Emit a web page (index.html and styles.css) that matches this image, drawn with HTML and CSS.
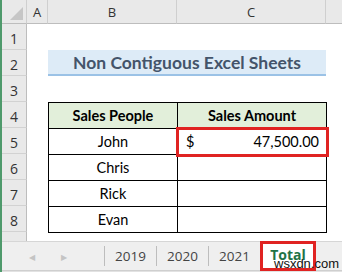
FILE: index.html
```html
<!DOCTYPE html>
<html lang="en">
<head>
    <meta charset="UTF-8">
    <meta name="viewport" content="width=device-width, initial-scale=1.0">
    <title>Non Contiguous Excel Sheets</title>
    <link rel="stylesheet" href="styles.css">
</head>
<body>
    <div class="window">
        <div class="sheet">
            <div class="corner"><span class="tri"></span></div>
            <div class="col-head">A</div>
            <div class="col-head">B</div>
            <div class="col-head">C</div>
            <div class="col-head last"></div>

            <div class="row-head">1</div>
            <div class="row-head">2</div>
            <div class="row-head">3</div>
            <div class="row-head">4</div>
            <div class="row-head">5</div>
            <div class="row-head">6</div>
            <div class="row-head">7</div>
            <div class="row-head">8</div>
            <div class="row-head r9"></div>

            <div class="title">Non Contiguous Excel Sheets</div>

            <table class="sales">
                <tr>
                    <th>Sales People</th>
                    <th>Sales Amount</th>
                </tr>
                <tr>
                    <td>John</td>
                    <td class="amount">
                        <div class="money"><span>$</span><span>47,500.00</span></div>
                        <span class="mark"></span>
                    </td>
                </tr>
                <tr>
                    <td>Chris</td>
                    <td></td>
                </tr>
                <tr>
                    <td>Rick</td>
                    <td></td>
                </tr>
                <tr>
                    <td>Evan</td>
                    <td></td>
                </tr>
            </table>
        </div>

        <div class="tabbar">
            <div class="nav">
                <span class="arrow">&#9664;</span>
                <span class="arrow">&#9654;</span>
            </div>
            <div class="tab">2019</div>
            <div class="tab">2020</div>
            <div class="tab">2021</div>
            <div class="tab active">Total<span class="mark"></span></div>
            <span class="watermark">wsxdn.com</span>
        </div>
        <div class="status"></div>
    </div>
</body>
</html>
```

FILE: styles.css
```css
body { margin: 0; font-family: Lato, "Open Sans", sans-serif; background: #fff; }
.window { width: 342px; height: 272px; border-left: 2px solid #4f9a6c; box-sizing: border-box; display: flex; flex-direction: column; overflow: hidden; }

.sheet { display: grid; grid-template-columns: 25px 21px 129px 149px 1fr; grid-template-rows: 24px repeat(8, 26px) 9px; }
.corner { background: #e9e9e9; border-right: 1px solid #cfcfcf; border-bottom: 1px solid #bdbdbd; position: relative; }
.corner .tri { position: absolute; right: 3px; bottom: 3px; width: 0; height: 0; border-left: 13px solid transparent; border-bottom: 13px solid #c6c6c6; }
.col-head { background: #e9e9e9; border-right: 1px solid #cfcfcf; border-bottom: 1px solid #bdbdbd; display: flex; align-items: center; justify-content: center; font-family: "Open Sans", sans-serif; font-size: 13px; color: #333; }
.col-head.last { border-right: none; }
.row-head { grid-column: 1; background: #e9e9e9; border-right: 1px solid #bdbdbd; border-bottom: 1px solid #d2d2d2; display: flex; align-items: center; justify-content: center; font-family: "Open Sans", sans-serif; font-size: 14px; color: #333; padding-top: 3px; box-sizing: border-box; }
.r9 { border-bottom: none; }

.title { grid-column: 3 / 5; grid-row: 3; background: #ddebf7; border-bottom: 2px solid #9bc2e6; display: flex; align-items: center; justify-content: center; font-weight: bold; font-size: 17.5px; color: #44546a; }

.sales { grid-column: 3 / 5; grid-row: 5 / 10; border-collapse: collapse; width: 279px; height: 131px; align-self: start; font-size: 14.5px; color: #000; }
.sales th, .sales td { border: 1px solid #000; text-align: center; padding: 0; height: 25px; }
.sales th { background: #e2efda; font-weight: bold; }
.sales th:first-child, .sales td:first-child { width: 128px; }
.sales td.amount { position: relative; }
.money { display: flex; justify-content: space-between; padding: 0 7px 0 8px; }
.mark { position: absolute; border: 3px solid #e02322; }
.amount .mark { left: -2px; top: -2px; right: -3px; bottom: -3px; }

.tabbar { height: 28px; background: #efefef; border-top: 1px solid #d6d6d6; display: flex; align-items: center; position: relative; font-family: "Open Sans", sans-serif; font-size: 13.5px; color: #444; }
.nav { width: 102px; display: flex; gap: 26px; padding-left: 27px; box-sizing: border-box; }
.arrow { font-size: 8px; color: #c4c4c4; }
.tab { width: 51px; height: 20px; border-left: 1px solid #bdbdbd; display: flex; align-items: center; justify-content: center; }
.tab.active { height: 28px; width: 56px; background: #fff; border-left: none; color: #217346; font-weight: bold; position: relative; font-size: 14px; padding-bottom: 3px; box-sizing: border-box; }
.tab.active .mark { left: 0; top: -1px; right: 0; bottom: -1px; }
.watermark { position: absolute; left: 272px; top: 14px; font-family: "Liberation Sans", sans-serif; font-size: 13px; color: #111; }
.status { flex: 1; background: #e2e2e2; border-top: 1px solid #cfcfcf; }
```
